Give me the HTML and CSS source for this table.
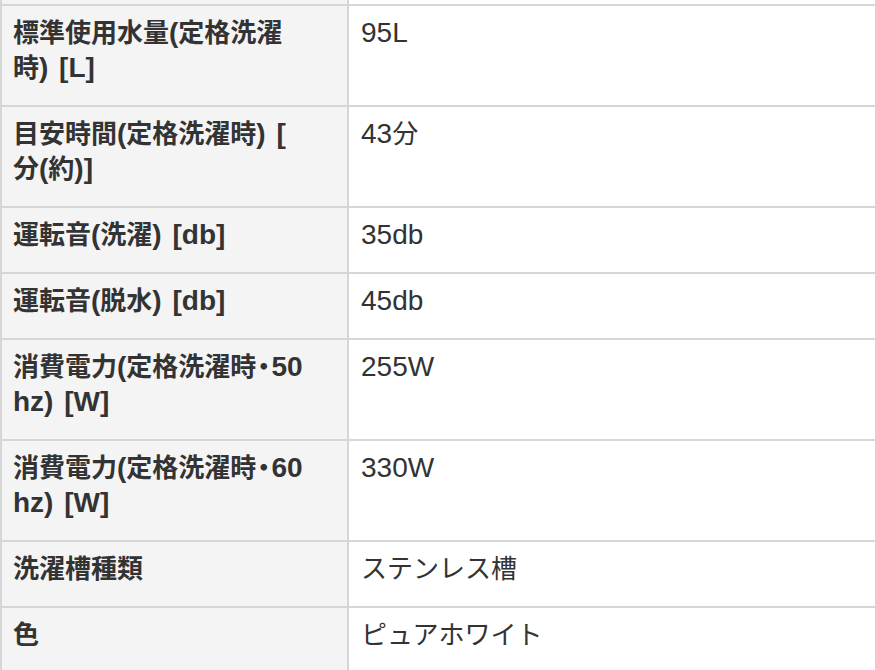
FILE: index.html
```html
<!DOCTYPE html>
<html lang="ja">
<head>
<meta charset="utf-8">
<title>仕様</title>
<link rel="stylesheet" href="styles.css">
</head>
<body>
<div class="spec">
  <div class="row tail"><div class="key"></div><div class="val"></div></div>
  <div class="row"><div class="key">標準使用水量<span class="en">(</span>定格洗濯<br>時<span class="en">) [L]</span></div><div class="val"><span class="en">95L</span></div></div>
  <div class="row"><div class="key">目安時間<span class="en">(</span>定格洗濯時<span class="en">) [</span><br>分<span class="en">(</span>約<span class="en">)]</span></div><div class="val"><span class="en">43</span>分</div></div>
  <div class="row"><div class="key">運転音<span class="en">(</span>洗濯<span class="en">) [db]</span></div><div class="val"><span class="en">35db</span></div></div>
  <div class="row"><div class="key">運転音<span class="en">(</span>脱水<span class="en">) [db]</span></div><div class="val"><span class="en">45db</span></div></div>
  <div class="row"><div class="key">消費電力<span class="en">(</span>定格洗濯時<span class="mid">・</span><span class="en">50</span><br><span class="en">hz) [W]</span></div><div class="val"><span class="en">255W</span></div></div>
  <div class="row"><div class="key">消費電力<span class="en">(</span>定格洗濯時<span class="mid">・</span><span class="en">60</span><br><span class="en">hz) [W]</span></div><div class="val"><span class="en">330W</span></div></div>
  <div class="row"><div class="key">洗濯槽種類</div><div class="val">ステンレス槽</div></div>
  <div class="row"><div class="key">色</div><div class="val">ピュアホワイト</div></div>
</div>
</body>
</html>
```
FILE: styles.css
```css
html, body {
  margin: 0;
  padding: 0;
  background: #ffffff;
  overflow: hidden;
}
.spec {
  width: 880px;
  font-family: "Liberation Sans", "Noto Sans CJK JP", sans-serif;
  font-size: 26px;
  line-height: 35px;
  color: #333333;
}
.row {
  display: grid;
  grid-template-columns: 349px 1fr;
  border-bottom: 2px solid #d6d6d6;
}
.key {
  box-sizing: border-box;
  background: #f4f4f4;
  border-left: 2px solid #d6d6d6;
  border-right: 2px solid #d6d6d6;
  padding: 10px 4px 19px 11px;
  font-weight: 700;
  white-space: nowrap;
}
.val {
  padding: 10px 12px 19px 12px;
}
.en {
  font-size: 28px;
  line-height: 0;
  word-spacing: 3px;
}
.mid {
  font-family: "Noto Sans CJK JP", sans-serif;
  font-feature-settings: "palt";
  line-height: 0;
  padding: 0 1px;
}
.tail .key,
.tail .val {
  height: 4px;
  padding: 0;
}
```
